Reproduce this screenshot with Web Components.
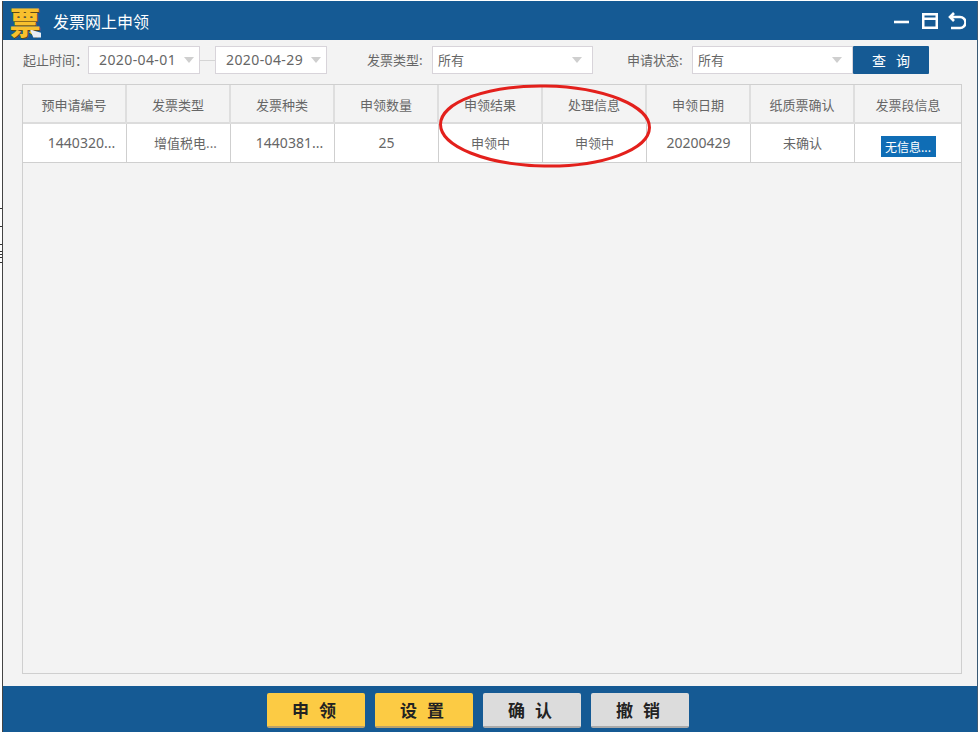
<!DOCTYPE html>
<html lang="zh">
<head>
<meta charset="utf-8">
<title>发票网上申领</title>
<style>
    html, body { margin: 0; height: 100%; background: #fff; overflow: hidden; }
    body { font-family: "Noto Sans CJK SC", "Noto Sans", sans-serif; color: #666; }
</style>
</head>
<body>
<desk-edge></desk-edge>
<app-window></app-window>
<script>
// bits of the window behind, they stick out on the left
class DeskEdge extends HTMLElement {
    connectedCallback() {
        const ys = [208, 226, 244, 251, 254, 257, 262];
        this.attachShadow({ mode: 'open' });
        this.shadowRoot.innerHTML = `
            <style>
                :host { display: block; position: absolute; left: 0; top: 0; }
                i { position: absolute; left: 0; width: 2px; height: 1px; background: #333; }
            </style>
            ${ys.map(y => `<i style="top:${y}px"></i>`).join('')}
        `;
    }
}

class TitleBar extends HTMLElement {
    connectedCallback() {
        this.attachShadow({ mode: 'open' });
        this.shadowRoot.innerHTML = `
            <style>
                :host { display: flex; align-items: center; height: 39px; background: #155a94; color: #fff; }
                .logo { position: relative; flex: none; width: 38px; height: 38px; margin-left: 3px; font-family: "Liberation Sans", "Noto Sans CJK SC", sans-serif; font-size: 31px; line-height: 43px; font-weight: 900; color: #f8c02e; text-align: center; text-shadow: 1px 1px 0 #5e4a16; }
                .corner { position: absolute; left: 24px; top: 28px; width: 11px; height: 8px; background: #e8eef4; clip-path: polygon(0 0, 100% 40%, 100% 100%, 30% 100%); }
                .title { margin-left: 9px; font-size: 16px; }
                .controls { margin-left: auto; margin-right: 11px; display: flex; align-items: center; }
                svg { display: block; fill: none; stroke: #fff; stroke-width: 2.6; }
                .min { margin-right: 13px; }
                .max { margin-right: 10px; }
            </style>
            <div class="logo">票<span class="corner"></span></div>
            <div class="title">发票网上申领</div>
            <div class="controls">
                <svg class="min" width="15" height="18" viewBox="0 0 15 18"><path d="M0 10h15"/></svg>
                <svg class="max" width="16" height="16" viewBox="0 0 16 16"><path d="M1.2 1.2h13.6v13.6H1.2zM1 5.8h14"/></svg>
                <svg width="18" height="18" viewBox="0 0 18 18"><path d="M6 1L2 5l4 4M2 5h10a4.8 4.8 0 0 1 0 11H3"/></svg>
            </div>
        `;
    }
}

class PickField extends HTMLElement {
    connectedCallback() {
        this.attachShadow({ mode: 'open' });
        this.shadowRoot.innerHTML = `
            <style>
                :host { display: flex; align-items: center; box-sizing: border-box; height: 28px; background: #fff; border: 1px solid #d8d4da; padding: 0 10px 2px 5px; font-size: 13px; color: #666; }
                :host([date]) { padding: 0 5px 2px 10px; font-family: "Noto Sans", sans-serif; font-size: 14px; letter-spacing: .4px; }
                .arrow { margin-left: auto; margin-top: 2px; width: 0; height: 0; border: 5px solid transparent; border-top: 6px solid #cfcfcf; border-bottom: 0; }
            </style>
            <slot></slot>
            <span class="arrow"></span>
        `;
    }
}

class QueryBar extends HTMLElement {
    connectedCallback() {
        this.attachShadow({ mode: 'open' });
        this.shadowRoot.innerHTML = `
            <style>
                :host { display: flex; align-items: center; height: 44px; padding: 6px 0 10px 20px; box-sizing: border-box; font-size: 13px; color: #666; }
                .date { width: 112px; }
                .line { width: 15px; height: 1px; background: #d5d5d5; }
                .kind { width: 161px; }
                label { padding-bottom: 2px; }
                label.a { width: 65px; }
                label.b { margin-left: 40px; width: 65px; }
                label.c { margin-left: 34px; width: 65px; }
                button { width: 76px; height: 28px; border: 0; border-radius: 1px; background: #155a94; color: #fff; font: inherit; font-size: 14px; letter-spacing: 10px; padding: 0 0 0 10px; }
            </style>
            <label class="a">起止时间：</label>
            <pick-field class="date" date>2020-04-01</pick-field>
            <span class="line"></span>
            <pick-field class="date" date>2020-04-29</pick-field>
            <label class="b">发票类型:</label>
            <pick-field class="kind">所有</pick-field>
            <label class="c">申请状态:</label>
            <pick-field class="kind">所有</pick-field>
            <button>查询</button>
        `;
    }
}

class DataTable extends HTMLElement {
    connectedCallback() {
        const head = ['预申请编号', '发票类型', '发票种类', '申领数量', '申领结果', '处理信息', '申领日期', '纸质票确认', '发票段信息'];
        const row = ['1440320...', '增值税电...', '1440381...', '25', '申领中', '申领中', '20200429', '未确认'];
        this.attachShadow({ mode: 'open' });
        this.shadowRoot.innerHTML = `
            <style>
                :host { display: block; position: relative; box-sizing: border-box; flex: 1; margin: 0 15px 12px 19px; border: 1px solid #cfcfcf; background: #f3f3f3; font-size: 13px; color: #666; }
                .row { display: grid; grid-template-columns: repeat(8, 104px) 1fr; text-align: center; }
                .head { height: 39px; line-height: 39px; border-bottom: 2px solid #dcdcdc; box-sizing: border-box; }
                .body { height: 39px; line-height: 38px; background: #fff; border-bottom: 1px solid #cfcfcf; box-sizing: border-box; }
                .row > div { border-right: 1px solid #cfcfcf; }
                .head > div { border-right: 2px solid #dedede; }
                .row > div:last-child { border-right: 0; }
                .body > div:nth-child(-n+3) { padding-left: 14px; }
                .num { font-family: "Noto Sans", "Noto Sans CJK SC", sans-serif; font-size: 14px; }
                .tag { display: inline-block; width: 55px; height: 21px; line-height: 21px; margin-top: 12px; background: #0f6db5; color: #fff; font-size: 12px; vertical-align: top; }
                svg { position: absolute; left: 415px; top: -1px; overflow: visible; pointer-events: none; }
            </style>
            <div class="row head">${head.map(t => `<div>${t}</div>`).join('')}</div>
            <div class="row body">
                ${row.map(t => `<div class="${/^[\d.]+$/.test(t) ? 'num' : ''}">${t}</div>`).join('')}
                <div><span class="tag">无信息...</span></div>
            </div>
            <svg width="214" height="86" viewBox="0 0 214 86">
                <ellipse cx="107" cy="42" rx="104.5" ry="40" fill="none" stroke="#e3201c" stroke-width="3" transform="rotate(1 107 42)"/>
            </svg>
        `;
    }
}

class ActionBar extends HTMLElement {
    connectedCallback() {
        this.attachShadow({ mode: 'open' });
        this.shadowRoot.innerHTML = `
            <style>
                :host { display: flex; justify-content: center; gap: 10px; height: 46px; padding: 7px 24px 0 0; box-sizing: border-box; background: #155a94; }
                button { width: 98px; height: 35px; border: 0; border-bottom: 2px solid #b9a16a; border-radius: 2px; padding: 0 0 0 6px; font: inherit; font-size: 17px; font-weight: 700; letter-spacing: 10px; color: #222; }
                .gold { background: #fccb44; }
                .grey { background: #dcdcdc; border-bottom-color: #aaa; }
            </style>
            <button class="gold">申领</button>
            <button class="gold">设置</button>
            <button class="grey">确认</button>
            <button class="grey">撤销</button>
        `;
    }
}

class AppWindow extends HTMLElement {
    connectedCallback() {
        this.attachShadow({ mode: 'open' });
        this.shadowRoot.innerHTML = `
            <style>
                :host { display: flex; flex-direction: column; box-sizing: border-box; width: 976px; height: 731px; margin: 1px 0 0 2px; background: #f3f3f3; border-left: 1px solid #444; border-right: 1px solid #3c5a74; }
            </style>
            <title-bar></title-bar>
            <query-bar></query-bar>
            <data-table></data-table>
            <action-bar></action-bar>
        `;
    }
}

customElements.define('desk-edge', DeskEdge);
customElements.define('title-bar', TitleBar);
customElements.define('pick-field', PickField);
customElements.define('query-bar', QueryBar);
customElements.define('data-table', DataTable);
customElements.define('action-bar', ActionBar);
customElements.define('app-window', AppWindow);
</script>
</body>
</html>
